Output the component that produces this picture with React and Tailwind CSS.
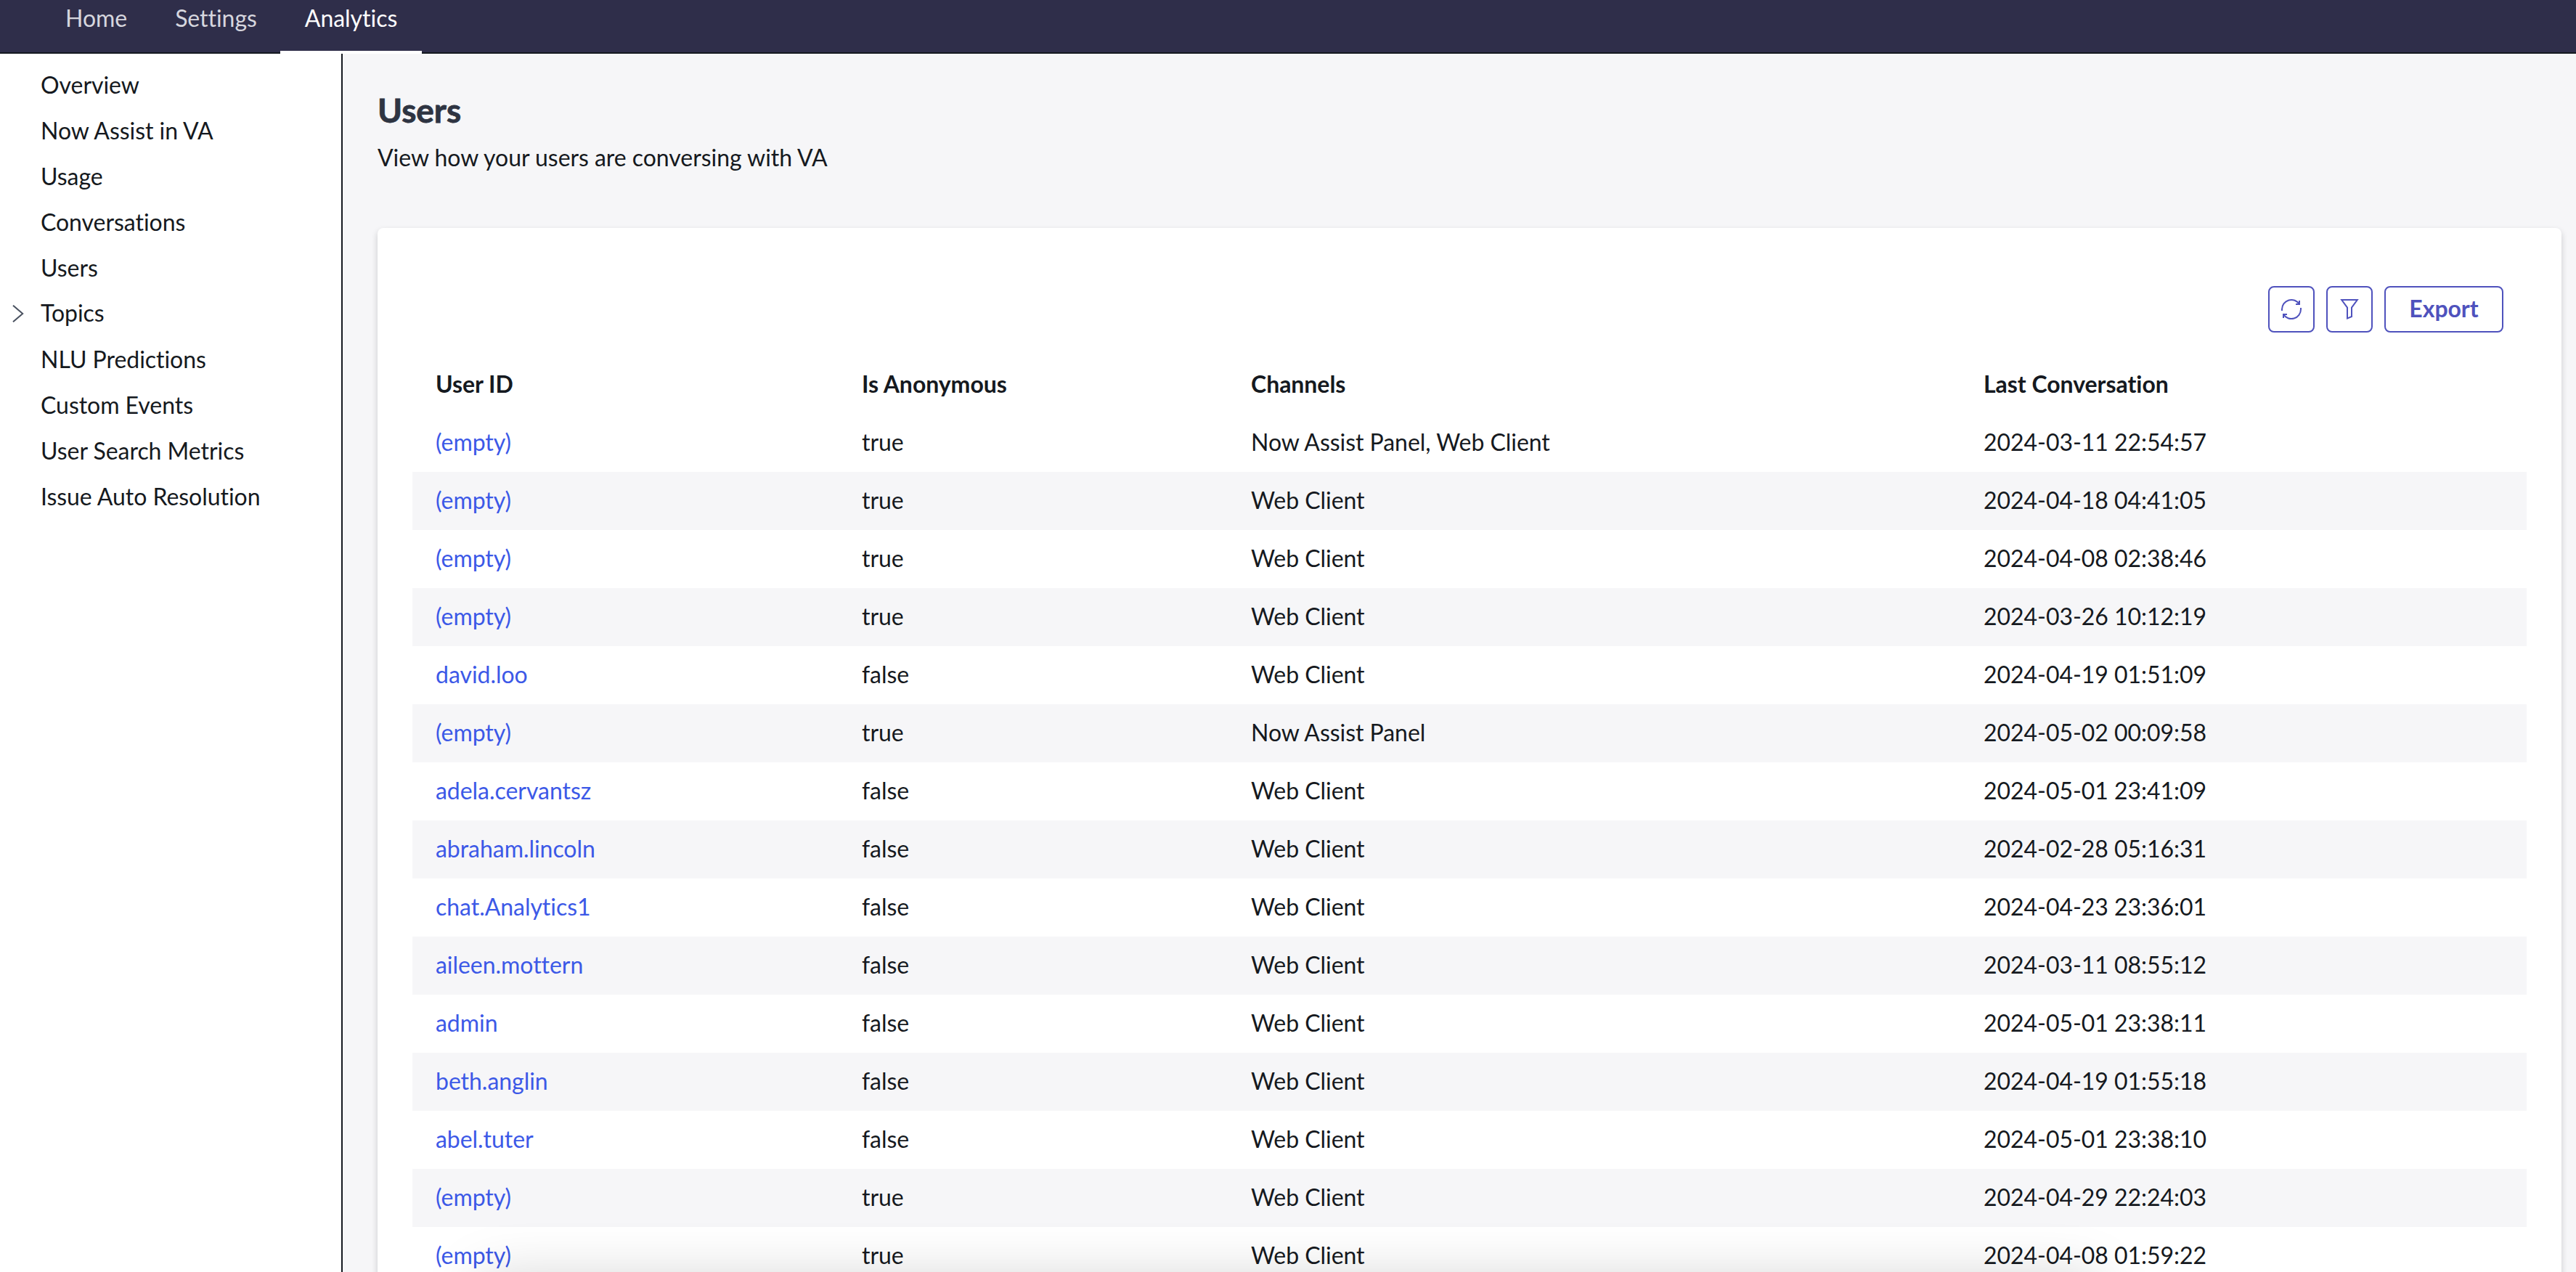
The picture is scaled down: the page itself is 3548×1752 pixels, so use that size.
const tabs = [
  { label: "Home", active: false },
  { label: "Settings", active: false },
  { label: "Analytics", active: true },
];

const menuItems = [
  { label: "Overview" },
  { label: "Now Assist in VA" },
  { label: "Usage" },
  { label: "Conversations" },
  { label: "Users" },
  { label: "Topics", expandable: true },
  { label: "NLU Predictions" },
  { label: "Custom Events" },
  { label: "User Search Metrics" },
  { label: "Issue Auto Resolution" },
];

const columns = ["User ID", "Is Anonymous", "Channels", "Last Conversation"];

const users = [
  { id: "(empty)", anonymous: "true", channels: "Now Assist Panel, Web Client", last: "2024-03-11 22:54:57" },
  { id: "(empty)", anonymous: "true", channels: "Web Client", last: "2024-04-18 04:41:05" },
  { id: "(empty)", anonymous: "true", channels: "Web Client", last: "2024-04-08 02:38:46" },
  { id: "(empty)", anonymous: "true", channels: "Web Client", last: "2024-03-26 10:12:19" },
  { id: "david.loo", anonymous: "false", channels: "Web Client", last: "2024-04-19 01:51:09" },
  { id: "(empty)", anonymous: "true", channels: "Now Assist Panel", last: "2024-05-02 00:09:58" },
  { id: "adela.cervantsz", anonymous: "false", channels: "Web Client", last: "2024-05-01 23:41:09" },
  { id: "abraham.lincoln", anonymous: "false", channels: "Web Client", last: "2024-02-28 05:16:31" },
  { id: "chat.Analytics1", anonymous: "false", channels: "Web Client", last: "2024-04-23 23:36:01" },
  { id: "aileen.mottern", anonymous: "false", channels: "Web Client", last: "2024-03-11 08:55:12" },
  { id: "admin", anonymous: "false", channels: "Web Client", last: "2024-05-01 23:38:11" },
  { id: "beth.anglin", anonymous: "false", channels: "Web Client", last: "2024-04-19 01:55:18" },
  { id: "abel.tuter", anonymous: "false", channels: "Web Client", last: "2024-05-01 23:38:10" },
  { id: "(empty)", anonymous: "true", channels: "Web Client", last: "2024-04-29 22:24:03" },
  { id: "(empty)", anonymous: "true", channels: "Web Client", last: "2024-04-08 01:59:22" },
];

function ChevronIcon() {
  return (
    <svg className="h-6 w-4" viewBox="0 0 16 24" fill="none" stroke="#4a5260" strokeWidth="2">
      <path d="M1 .7 14.2 12 1 23.3" />
    </svg>
  );
}

function RefreshIcon() {
  return (
    <svg className="size-8" viewBox="0 0 32 32" fill="none" stroke="currentColor" strokeWidth="2">
      <path d="M3 18V16A13 13 0 0 1 27 9" />
      <path d="M29 14V16A13 13 0 0 1 5 23" />
      <path d="M27 4V9H22" />
      <path d="M5 28V23H10" />
    </svg>
  );
}

function FilterIcon() {
  return (
    <svg className="size-8" viewBox="0 0 32 32" fill="none" stroke="currentColor" strokeWidth="2">
      <path d="M5.2 3H26.8L19 13.6V26L13 28.6V13.6Z" />
    </svg>
  );
}

function IconButton({ label, children }) {
  return (
    <button aria-label={label} className="flex size-16 items-center justify-center rounded-lg border-2 border-[#4f52bd]">
      {children}
    </button>
  );
}

function TopNav() {
  return (
    <nav className="flex h-[74px] shrink-0 border-b-2 border-[#151920] bg-[#2f2e4a] pl-14">
      {tabs.map((tab) => (
        <a
          key={tab.label}
          className={
            tab.active
              ? "-mb-0.5 h-[74px] border-b-4 border-white pt-[5px] pr-[34px] pl-[34px] text-white"
              : "pt-[5px] pr-8 pl-[34px] text-[#d6d6de]"
          }
        >
          {tab.label}
        </a>
      ))}
    </nav>
  );
}

function SideMenu() {
  return (
    <aside className="w-[472px] shrink-0 border-r-2 border-[#151920] bg-white pt-[23px]">
      {menuItems.map((item) => (
        <div key={item.label} className={item.expandable ? "flex h-16" : "flex h-[62.9px]"}>
          <span className="flex w-14 justify-center pt-[9px] pr-[6px]">
            {item.expandable ? <ChevronIcon /> : null}
          </span>
          <span>{item.label}</span>
        </div>
      ))}
    </aside>
  );
}

function UsersTable() {
  return (
    <div className="grid grid-cols-[587px_536px_1009px_1fr]">
      {columns.map((title) => (
        <div key={title} className="flex h-20 items-center px-8 pb-0.5 font-bold">
          {title}
        </div>
      ))}
      {users.map((user, index) => (
        <div
          key={index}
          className="col-span-4 grid h-20 grid-cols-subgrid items-center pb-0.5 odd:bg-white even:bg-[#f6f6f8]"
        >
          <a className="px-8 text-[#3c59e7]">{user.id}</a>
          <span className="px-8">{user.anonymous}</span>
          <span className="px-8">{user.channels}</span>
          <span className="px-8">{user.last}</span>
        </div>
      ))}
    </div>
  );
}

function App() {
  return (
    <div className="flex h-screen flex-col overflow-hidden bg-[#f6f6f8] font-['Lato',sans-serif] text-[32px] leading-10 tracking-[-0.04px] text-[#151920] [font-variant-ligatures:no-common-ligatures]">
      <TopNav />
      <div className="flex min-h-0 flex-1">
        <SideMenu />
        <main className="relative min-w-0 flex-1 overflow-hidden pt-[50px] pr-5 pl-12">
          <h1 className="text-[46px] leading-[56px] font-bold text-[#2e3442] [-webkit-text-stroke:0.8px_#2e3442]">Users</h1>
          <p className="mt-[17px]">View how your users are conversing with VA</p>
          <section className="mt-[77px] h-[1500px] rounded-lg bg-white px-12 pt-20 shadow-[0_4px_8px_rgba(21,25,32,0.2)]">
            <div className="flex h-16 justify-end gap-4 pr-8 text-[#4f52bd]">
              <IconButton label="Refresh">
                <RefreshIcon />
              </IconButton>
              <IconButton label="Filter">
                <FilterIcon />
              </IconButton>
              <button className="h-16 w-[164px] rounded-lg border-2 border-[#4f52bd] pb-[3px] font-bold">
                Export
              </button>
            </div>
            <div className="mt-8">
              <UsersTable />
            </div>
          </section>
          <div className="pointer-events-none absolute right-[658px] -bottom-[210px] left-[188px] h-[200px] shadow-[0_0_80px_rgba(0,0,0,0.18)]" />
        </main>
      </div>
    </div>
  );
}

export default App;
